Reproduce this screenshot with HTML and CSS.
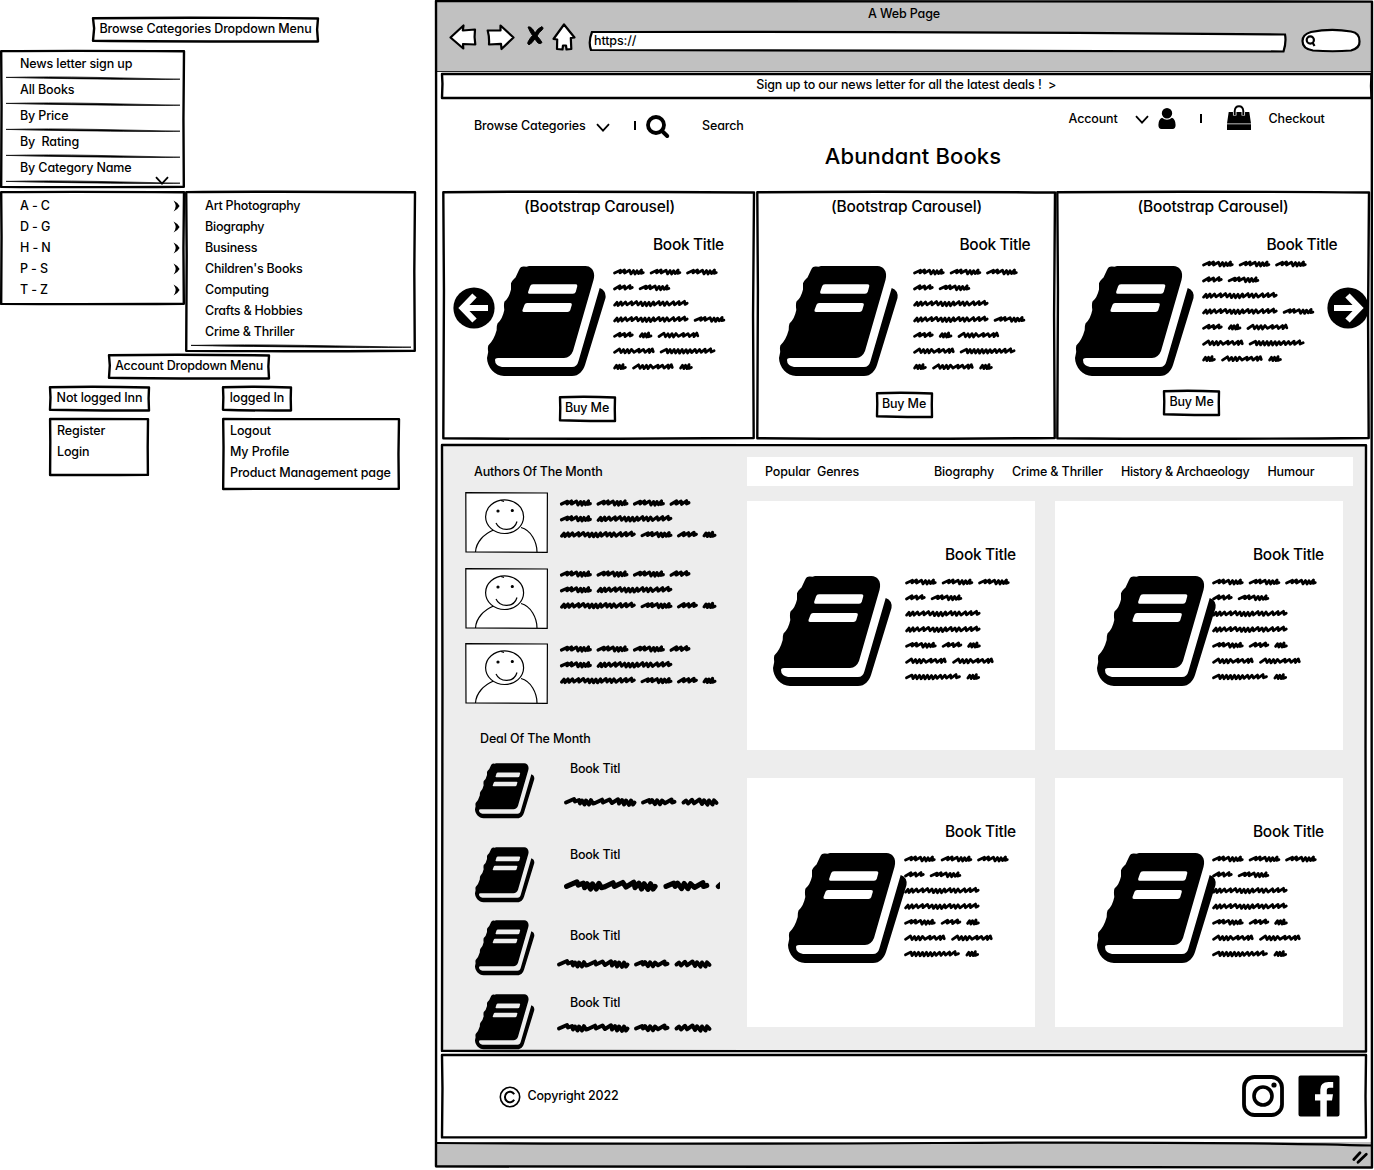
FILE: index.html
```
<!DOCTYPE html>
<html lang="en">
<head>
<meta charset="utf-8">
<title>Abundant Books wireframe</title>
<link rel="stylesheet" href="styles.css">
</head>
<body>
<svg class="defs" aria-hidden="true">
  <defs>
    <symbol id="frame-s" viewBox="0 0 100 100" preserveAspectRatio="none"><path vector-effect="non-scaling-stroke" d="M0 1Q45 -4 100 2L99.600 50 100 102Q40 103 0 99L.5 45Z"/></symbol>
    <symbol id="frame-m" viewBox="0 0 100 100" preserveAspectRatio="none"><path vector-effect="non-scaling-stroke" d="M.1 .1Q40 -.4 100 .2L99.700 50 99.900 99.800Q45 100.400 .1 99.900L.3 40Z"/></symbol>
    <symbol id="frame-l" viewBox="0 0 100 100" preserveAspectRatio="none"><path vector-effect="non-scaling-stroke" d="M0 0Q40 -.05 100 .05L99.950 50 100 100Q45 100.100 0 99.900L.05 40Z"/></symbol>
    <symbol id="rule" viewBox="0 0 174 5"><path d="M0 2.400Q40 1.400 90 2.400T174 4.200Q150 4.800 90 4T0 2.400Z" stroke="#000" stroke-width=".7"/></symbol>
    <symbol id="chevron" viewBox="0 0 14 9"><path d="M1 1.200 7 7.600 13 1.200" fill="none" stroke="#000" stroke-width="1.800"/></symbol>
    <symbol id="dart" viewBox="0 0 7 12"><path d="M.6.4Q4.400 2.200 6.600 6 4.400 9.800.6 11.600 2.600 8.400 2.700 6 2.600 3.600.6.4Z"/></symbol>
    <symbol id="book" viewBox="0 0 119 110"><path fill-rule="evenodd" d="M37 .6Q33.500.3 32 4L28.500 11.500Q24.500 15 24 17.500L24 23.500Q22 32 17.500 35.500 16.500 38 17.300 44 15.500 53 10.500 57.500 9.500 60 9.700 64 7 74 1.300 79.500.5 82 1.200 86L0 92C0 101 8 110 17 110H85C92 110 96 105 98 99L118.500 32Q119.500 24.500 112.700 22L91.500 95Q90 101 85 101H15Q8 99.500 8 94 8 92 11 92H77Q83.500 91.500 86 85L106.500 14C109 5 104 0 98.500 0H42L39.500.8ZM46 18.300H88.500Q90.700 18.300 90.200 20.500L88.800 25.800Q88.200 27.800 86 27.800H42.500Q40.600 27.800 41.200 25.800L43 20.500Q43.600 18.300 46 18.300ZM40 37H83Q85.300 37 84.700 39.200L83.200 44.200Q82.500 46 80.500 46H37Q35 46 35.500 44L37.500 38.800Q38.200 37 40 37Z"/></symbol>

    <!-- scribbled words, named by their length -->
    <g id="w2"><path d="M1.600 6.200 3.500 3.500 4.800 6.800 6.500 3.500 8 6.800 10 2.800 10 6.600 12.400 5.700"/></g>
    <g id="w3"><path d="M1.500 6.200 7 3 6.500 6 11.500 3.200 12 6.300 17 2.800 17 5.800 19.300 4.700"/></g>
    <g id="w4"><path d="M1.500 6 7.500 3.300 7 5.900 11.500 3 11.500 6 16.500 3.200 18 6.900 20.500 3.600 22 7 24 3.700 25.500 6.500 28.500 3 28 6.300 30.300 5.700"/></g>
    <g id="w6"><path d="M1.500 6.300 6.500 3 8 6.500 10.500 3.600 12 6.800 14.500 3.500 16 6.800 18.500 3.400 21 6.200 26 3.300 26 6.200 30.500 3.400 32 6.300 36 3.300 36.500 6.500 39.300 2.900 40.300 5.700"/></g>
    <g id="w8"><path d="M1.500 6 7 3.300 8 6.800 10.500 3.500 12 6.900 14.500 3.500 16 7 18.500 3.600 20 7.100 22.500 3.500 24 7 26.500 3.700 28 7 30.500 3.700 32 6.600 35.500 3.400 37 6.600 40 3.400 41.500 6.300 45.500 3.200 46 6.300 51 2.800 51.500 6 54.500 4.800"/></g>
    <g id="w10"><path d="M1.600 6.500 4 3.700 5 6.900 8 3.400 9 6.600 12.500 3.400 14 6.300 18.500 3.200 19 6.300 23.500 3 25 6.300 28 3.500 29.500 7 32 3.700 33.500 7.100 36 3.700 37.500 7.100 40.500 3.400 41.500 6.400 46 3 47 6.300 50 3.500 51.500 6.800 54 3.400 56 6.500 60.500 3.200 61.500 6.300 66 3 66.500 6.100 71.500 2.700 72 5.800 74.200 4.600"/></g>

    <symbol id="para-a" viewBox="0 0 113 105">
      <use href="#w4"/><use href="#w4" x="36.600"/><use href="#w4" x="73"/>
      <use href="#w3" y="15.800"/><use href="#w4" x="25.600" y="15.800"/>
      <use href="#w10" y="31.600"/>
      <use href="#w10" y="47.400"/><use href="#w4" x="80.600" y="47.400"/>
      <use href="#w3" y="63.200"/><use href="#w2" x="25.600" y="63.200"/><use href="#w6" x="44.500" y="63.200"/>
      <use href="#w6" y="79"/><use href="#w8" x="46.600" y="79"/>
      <use href="#w2" y="94.800"/><use href="#w6" x="19" y="94.800"/><use href="#w2" x="66" y="94.800"/>
    </symbol>
    <symbol id="para-b" viewBox="0 0 113 105">
      <use href="#w4"/><use href="#w4" x="36.600"/><use href="#w4" x="73"/>
      <use href="#w3" y="15.800"/><use href="#w4" x="25.600" y="15.800"/>
      <use href="#w10" y="31.600"/>
      <use href="#w10" y="47.400"/>
      <use href="#w4" y="63.200"/><use href="#w3" x="36.600" y="63.200"/><use href="#w2" x="62" y="63.200"/>
      <use href="#w6" y="79"/><use href="#w6" x="47" y="79"/>
      <use href="#w8" y="94.800"/><use href="#w2" x="61.300" y="94.800"/>
    </symbol>
    <symbol id="para-c" viewBox="0 0 158 42">
      <use href="#w4"/><use href="#w4" x="36.600"/><use href="#w4" x="73"/><use href="#w3" x="109.600"/>
      <use href="#w4" y="15.800"/><use href="#w10" x="36.600" y="15.800"/>
      <use href="#w10" y="31.600"/><use href="#w4" x="80.600" y="31.600"/><use href="#w3" x="117" y="31.600"/><use href="#w2" x="142.500" y="31.600"/>
    </symbol>
    <symbol id="line" viewBox="0 0 155 12">
      <path d="M2 6.500 10 3 11 5.500 15 4 16 7.500 18 4.500 20.500 8.500 22 4.500 25 8.500 27 4.200 29 7.500 31 7 38 3.700 39 6.500 45.500 3.500 48 7 54 3.300 55 7.500 58 4 60 8.500 62 4.500 65 8.800 67 4.500 69 8.500 70.500 6.500"/>
      <path d="M79 6.500 85 4 86 6.500 88 4 91 8.200 93 4.300 96 8.200 98 4.500 101 7.300 107.500 3.600 108 6.500 110.500 5.800"/>
      <path d="M119.500 6.500 122 4.500 124 7.500 128 3.800 130 7.300 135.500 3.500 138 8 140 4.300 143.500 8.600 145 4.500 148.500 8.500 150 4.300 152.500 6.800"/>
    </symbol>
    <symbol id="portrait" viewBox="0 0 83 61">
      <path d="M.8.7 82.400 1 82.200 60.300 1 60Z" fill="#fff"/>
      <path d="M10.500 60C11 50 19 42 28.500 38M56 35.500C66 38 72 50 72 60" fill="none"/>
      <ellipse cx="39.600" cy="24.700" rx="19" ry="16.800" fill="#fff"/>
      <path d="M31 31C35 39.500 49 40 52 29.500" fill="none"/>
      <circle cx="33" cy="19" r="1" fill="#000"/><circle cx="47.300" cy="18.500" r="1" fill="#000"/>
      <path d="M36 8.500 39 9.500" fill="none"/>
    </symbol>
  </defs>
</svg>

<aside class="notes">
  <h2 class="tag tag-browse"><svg class="frame"><use href="#frame-s"/></svg>Browse Categories Dropdown Menu</h2>

  <ul class="menu menu-main">
    <svg class="frame"><use href="#frame-m"/></svg>
    <li><span>News letter sign up</span><svg class="rule"><use href="#rule"/></svg></li>
    <li><span>All Books</span><svg class="rule"><use href="#rule"/></svg></li>
    <li><span>By Price</span><svg class="rule"><use href="#rule"/></svg></li>
    <li><span>By&nbsp; Rating</span><svg class="rule"><use href="#rule"/></svg></li>
    <li><span>By Category Name</span><svg class="rule"><use href="#rule"/></svg></li>
    <svg class="chevron menu-chevron"><use href="#chevron"/></svg>
  </ul>

  <div class="submenus">
    <ul class="menu menu-letters">
      <svg class="frame"><use href="#frame-m"/></svg>
      <li><span>A - C</span><svg class="dart"><use href="#dart"/></svg></li>
      <li><span>D - G</span><svg class="dart"><use href="#dart"/></svg></li>
      <li><span>H - N</span><svg class="dart"><use href="#dart"/></svg></li>
      <li><span>P - S</span><svg class="dart"><use href="#dart"/></svg></li>
      <li><span>T - Z</span><svg class="dart"><use href="#dart"/></svg></li>
    </ul>
    <ul class="menu menu-genres">
      <svg class="frame"><use href="#frame-m"/></svg>
      <li><span>Art Photography</span></li>
      <li><span>Biography</span></li>
      <li><span>Business</span></li>
      <li><span>Children's Books</span></li>
      <li><span>Computing</span></li>
      <li><span>Crafts &amp; Hobbies</span></li>
      <li><span>Crime &amp; Thriller</span></li>
      <svg class="rule rule-wide" viewBox="0 0 174 5" preserveAspectRatio="none"><use href="#rule" width="174" height="5"/></svg>
    </ul>
  </div>

  <h2 class="tag tag-account"><svg class="frame"><use href="#frame-s"/></svg>Account Dropdown Menu</h2>

  <div class="accounts">
    <section class="account-out">
      <h3 class="tag"><svg class="frame"><use href="#frame-s"/></svg>Not logged Inn</h3>
      <ul class="menu"><svg class="frame"><use href="#frame-m"/></svg><li><span>Register</span></li><li><span>Login</span></li></ul>
    </section>
    <section class="account-in">
      <h3 class="tag"><svg class="frame"><use href="#frame-s"/></svg>logged In</h3>
      <ul class="menu"><svg class="frame"><use href="#frame-m"/></svg><li><span>Logout</span></li><li><span>My Profile</span></li><li><span>Product Management page</span></li></ul>
    </section>
  </div>
</aside>

<div class="browser">
  <svg class="frame browser-frame"><use href="#frame-l"/></svg>
  <header class="chrome">
    <p class="chrome-title"><span>A Web Page</span></p>
    <div class="toolbar">
      <svg class="tool back" viewBox="0 0 28 26"><path d="M1.500 13.500 14.500 1.500 13.800 6.500 26 5.500Q25 13 26.300 20.500L14 20 14.300 24.500Z"/></svg>
      <svg class="tool forward" viewBox="0 0 29 26"><path d="M1.700 6.500 14.500 6.500 14.500 1.500 27.500 13.500 15.500 25 15 19.800 3 20.500Q3.500 13 1.700 6.500Z"/></svg>
      <svg class="tool stop" viewBox="0 0 18 20"><path d="M2 1Q4 0 6.500 3L9 7Q12 2 16 .6 18 2 16.500 3.500 13 6 11 10 14 13 16 16.500 14.500 18.500 12 17L8.800 13Q6 17.500 3 18.800 1 18 2 16 4 12 6.500 9.500 3.500 5 2 1Z"/></svg>
      <svg class="tool home" viewBox="0 0 24 28"><path d="M12 1.500 22.500 14.500 18.800 15 19.300 26 14.500 26.500 14 22.500 11 22.500 10.500 26.500 5 26 5.200 16.500 1.500 16Z"/></svg>
      <div class="url"><svg viewBox="0 0 699 24" class="outline"><path d="M4 2Q300 1 697 4.500 698.500 12 695.500 21.500 350 21.500 3 20 0 12 4 2Z"/></svg><span>https://</span></div>
      <svg class="find outline" viewBox="0 0 60 25"><path d="M10 4Q30 0 50 3.500 59 5 58.500 13.500 59 20 50 22.500 32 24 12 22.500 1.500 21 1.500 13 1.500 6.500 10 4Z"/><circle cx="9.300" cy="12" r="3.600"/><path d="M11.500 14.500 13.500 18"/></svg>
    </div>
  </header>

  <p class="newsletter"><svg class="frame"><use href="#frame-l"/></svg><span>Sign up to our news letter for all the latest deals !&nbsp; &gt;</span></p>

  <div class="masthead">
    <nav class="nav-left">
      <span>Browse Categories</span>
      <svg class="chevron"><use href="#chevron"/></svg>
      <i class="bar"></i>
      <svg class="search-icon" viewBox="0 0 24 24"><circle cx="10" cy="10" r="8" fill="none" stroke="#000" stroke-width="3.800"/><path d="M15.800 15.800 21.200 21" stroke="#000" stroke-width="4" stroke-linecap="round"/></svg>
      <span>Search</span>
    </nav>
    <h1><span>Abundant Books</span></h1>
    <nav class="nav-right">
      <span>Account</span>
      <svg class="chevron"><use href="#chevron"/></svg>
      <svg class="person" viewBox="0 0 18 21"><path d="M9 0A5.200 5.300 0 1 1 9 10.600 5.200 5.300 0 1 1 9 0ZM4 9.800Q9 13.500 14 9.800 17.600 11.500 17.600 17 17.500 21 14.500 21H3.500Q.5 21 .4 17 .4 11.500 4 9.800Z"/></svg>
      <i class="bar"></i>
      <svg class="bag" viewBox="0 0 24 25"><path d="M1.700 7H22.300L24 18.500H0ZM0 19.300H24V25H0Z"/><path d="M7.700 10.500V6Q8 1 12 1 16 1 16.300 6V10.500" fill="none" stroke="#fff" stroke-width="3.500"/><path d="M7.700 10V6Q8 1.200 12 1.200 16 1.200 16.300 6V10" fill="none" stroke="#000" stroke-width="1.900"/></svg>
      <span>Checkout</span>
    </nav>
  </div>

  <section class="carousel">
    <article class="slide slide-1">
      <svg class="frame"><use href="#frame-m"/></svg>
      <h2>(Bootstrap Carousel)</h2><h3>Book Title</h3>
      <div class="volume"><svg class="book"><use href="#book"/></svg><svg class="para"><use href="#para-a"/></svg></div>
      <button><svg class="frame"><use href="#frame-s"/></svg>Buy Me</button>
      <svg class="arrow arrow-prev" viewBox="0 0 42 42"><circle cx="21" cy="21" r="20.600"/><path d="M21.500 8.500 9.500 21 21.500 33.500M10 21H35" fill="none" stroke="#fff" stroke-width="6"/></svg>
    </article>
    <article class="slide slide-2">
      <svg class="frame"><use href="#frame-m"/></svg>
      <h2>(Bootstrap Carousel)</h2><h3>Book Title</h3>
      <div class="volume"><svg class="book"><use href="#book"/></svg><svg class="para"><use href="#para-a"/></svg></div>
      <button><svg class="frame"><use href="#frame-s"/></svg>Buy Me</button>
    </article>
    <article class="slide slide-3">
      <svg class="frame"><use href="#frame-m"/></svg>
      <h2>(Bootstrap Carousel)</h2><h3>Book Title</h3>
      <div class="volume"><svg class="book"><use href="#book"/></svg><svg class="para"><use href="#para-a"/></svg></div>
      <button><svg class="frame"><use href="#frame-s"/></svg>Buy Me</button>
      <svg class="arrow arrow-next" viewBox="0 0 42 42"><circle cx="21" cy="21" r="20.600"/><path d="M20.500 8.500 32.500 21 20.500 33.500M32 21H7" fill="none" stroke="#fff" stroke-width="6"/></svg>
    </article>
  </section>

  <main class="shop">
    <svg class="frame"><use href="#frame-l"/></svg>
    <div class="side">
      <h2 class="authors-title"><span>Authors Of The Month</span></h2>
      <div class="author"><svg class="portrait"><use href="#portrait"/></svg><svg class="bio"><use href="#para-c"/></svg></div>
      <div class="author author-2"><svg class="portrait"><use href="#portrait"/></svg><svg class="bio"><use href="#para-c"/></svg></div>
      <div class="author author-3"><svg class="portrait"><use href="#portrait"/></svg><svg class="bio"><use href="#para-c"/></svg></div>
      <h2 class="deals-title"><span>Deal Of The Month</span></h2>
      <div class="deal deal-1"><svg class="mini-book"><use href="#book"/></svg><div><span>Book Titl</span><svg class="line"><use href="#line"/></svg></div></div>
      <div class="deal deal-2"><svg class="mini-book"><use href="#book"/></svg><div><span>Book Titl</span><svg class="line" viewBox="0 0 121 12" preserveAspectRatio="xMinYMin slice"><use href="#line" width="155" height="12"/></svg></div></div>
      <div class="deal deal-3"><svg class="mini-book"><use href="#book"/></svg><div><span>Book Titl</span><svg class="line"><use href="#line"/></svg></div></div>
      <div class="deal deal-4"><svg class="mini-book"><use href="#book"/></svg><div><span>Book Titl</span><svg class="line"><use href="#line"/></svg></div></div>
    </div>
    <div class="catalogue">
      <nav class="genres"><b>Popular&nbsp; Genres</b><span>Biography</span><span>Crime &amp; Thriller</span><span class="genre-long">History &amp; Archaeology</span><span>Humour</span></nav>
      <div class="cards">
        <article class="card card-1"><h3>Book Title</h3><div class="volume"><svg class="book"><use href="#book"/></svg><svg class="para"><use href="#para-b"/></svg></div></article>
        <article class="card card-2"><h3>Book Title</h3><div class="volume"><svg class="book"><use href="#book"/></svg><svg class="para"><use href="#para-b"/></svg></div></article>
        <article class="card card-3"><h3>Book Title</h3><div class="volume"><svg class="book"><use href="#book"/></svg><svg class="para"><use href="#para-b"/></svg></div></article>
        <article class="card card-4"><h3>Book Title</h3><div class="volume"><svg class="book"><use href="#book"/></svg><svg class="para"><use href="#para-b"/></svg></div></article>
      </div>
    </div>
  </main>

  <footer class="footer">
    <svg class="frame"><use href="#frame-l"/></svg>
    <svg class="copy" viewBox="0 0 22 22"><circle cx="11" cy="11" r="9.700" fill="none" stroke="#000" stroke-width="1.600"/><path d="M15.200 8.200A5 5.300 0 1 0 15.200 13.800" fill="none" stroke="#000" stroke-width="2"/></svg>
    <span>Copyright 2022</span>
    <svg class="instagram" viewBox="0 0 42 42"><rect x="2" y="2" width="38" height="38" rx="10.500" fill="none" stroke="#000" stroke-width="3.800"/><circle cx="21" cy="21" r="9" fill="none" stroke="#000" stroke-width="3.600"/><circle cx="32" cy="10" r="2.600"/></svg>
    <svg class="facebook" viewBox="0 0 42 42"><path fill-rule="evenodd" d="M2.500.5H39.500Q41.500.5 41.500 2.500V39.500Q41.500 41.500 39.500 41.500H28.800V25.600H34L35 19.200H28.800V15.500Q28.800 12.800 31.500 12.800H35.200V7H30.500Q22.300 7 22.300 14.500V19.200H17V25.600H22.300V41.500H2.500Q.5 41.500.5 39.500V2.500Q.5.5 2.500.5Z"/></svg>
  </footer>
  <div class="status"><svg viewBox="0 0 936 27" preserveAspectRatio="none" class="status-line"><path d="M0 1Q200 2.500 500 1T936 3.500"/></svg><svg class="grip" viewBox="0 0 16 13"><path d="M1.800 8.500 8 1.800M6 11.300 14.300 3.300"/></svg></div>
</div>
</body>
</html>
```
FILE: styles.css
```
* { box-sizing: border-box; margin: 0; padding: 0; }
body {
  display: flex;
  width: 1374px;
  height: 1170px;
  overflow: hidden;
  background: #fff;
  color: #000;
  font: 500 12.5px/21px Inter, "Open Sans", sans-serif;
  font-feature-settings: "cv11";
  letter-spacing: -0.13px;
  white-space: nowrap;
}
h1, h2, h3, button { font: inherit; letter-spacing: inherit; font-feature-settings: inherit; }
ul { list-style: none; }
svg { display: block; flex: none; overflow: visible; }
symbol { overflow: visible; }
.defs { position: absolute; width: 0; height: 0; }

/* hand-drawn outline laid over its box */
.frame {
  position: absolute;
  inset: 0;
  width: 100%;
  height: 100%;
  fill: none;
  stroke: #000;
  stroke-width: 2.4;
  stroke-linejoin: round;
  pointer-events: none;
}

.tag, .menu, .browser, .newsletter, .slide, .slide button, .shop, .footer { position: relative; }
.chevron { width: 14px; height: 9px; }

/* left column */
.notes { width: 436px; flex: none; padding-top: 18px; }
.tag { height: 23px; line-height: 22px; text-align: center; }
.tag-browse { width: 225px; margin-left: 93px; }
.menu { padding-top: 3px; }
.menu-main { width: 183px; height: 136px; margin: 10px 0 0 1px; padding-top: 2px; }
.menu-main li { height: 26px; padding-left: 19px; }
.menu-main span { display: block; }
.rule { width: 174px; height: 5px; margin-left: -14px; }
.menu-main .rule { margin-top: 1px; }
.menu-chevron { position: absolute; left: 154px; top: 125px; }
.submenus { display: flex; gap: 2px; margin: 5px 0 0 1px; align-items: flex-start; }
.menu-letters { width: 183px; height: 112px; }
.menu-letters li { display: flex; justify-content: space-between; align-items: center; padding: 0 4px 0 19px; }
.dart { width: 7px; height: 12px; margin-top: 1px; }
.menu-genres { width: 229px; height: 159px; }
.menu-genres li { padding-left: 19px; letter-spacing: -0.22px; }
.rule-wide { width: 220px; margin: 1px 0 0 5px; }
.tag-account { width: 160px; margin: 4px 0 0 109px; letter-spacing: -0.2px; }
.accounts { display: flex; margin: 9px 0 0 50px; gap: 74px; }
.accounts .menu { margin-top: 9px; padding: 1px 0 0 7px; }
.account-out { width: 99px; }
.account-out .menu { width: 98px; height: 56px; }
.account-in .tag { width: 68px; }
.account-in .menu { width: 176px; height: 70px; }

/* browser window */
.browser { width: 936px; height: 1166.5px; margin-top: 1px; flex: none; }
.browser-frame { z-index: 1; }
.chrome { height: 71px; background: #c1c1c1; border-bottom: 1px solid #222; }
.chrome-title { padding-top: 3px; text-align: center; line-height: 20px; }
.toolbar { display: flex; align-items: flex-start; padding-left: 13px; }
.tool { fill: #fff; stroke: #000; stroke-width: 2.2; stroke-linejoin: round; }
.back { width: 28px; height: 26px; }
.forward { width: 29px; height: 26px; margin-left: 9px; }
.stop { width: 18px; height: 20px; margin: 2px 0 0 11px; fill: #000; stroke: #000; stroke-width: 1; }
.home { width: 24px; height: 28px; margin-left: 8px; margin-top: -1px; }
.url { position: relative; width: 699px; height: 24px; margin: 6px 0 0 12px; padding-left: 6px; }
.outline { fill: #fff; stroke: #000; stroke-width: 2.2; }
.url svg { position: absolute; inset: 0; width: 699px; height: 24px; }
.url span { position: relative; }
.find { width: 60px; height: 25px; margin: 4px 0 0 14px; }

.newsletter { height: 24px; margin: 1.5px 1px 0 5.5px; text-align: center; line-height: 22px; }
.masthead { display: grid; grid-template-columns: 350px 254px 332px; height: 94.5px; }
.masthead nav { display: flex; align-items: center; height: 30px; }
.nav-left { padding-left: 38px; margin-top: 12.5px; }
.nav-left span:first-child { width: 122px; }
.bar { width: 1.5px; height: 9px; background: #000; }
.nav-left .chevron { margin-top: 4px; }
.nav-left .bar { margin-left: 24px; }
.search-icon { width: 24px; height: 24px; margin: 3px 32px 0 10.5px; }
h1 { margin-top: 46px; font-size: 22px; line-height: 24px; text-align: center; letter-spacing: 0.14px; }
.nav-right { margin-top: 5.5px; padding-left: 28.500px; }
.nav-right span:first-child { width: 66.500px; }
.nav-right .chevron { margin-top: 3px; }
.person { width: 18px; height: 21px; margin: 1px 24px 0 9px; }
.bag { width: 24px; height: 25px; margin: -2px 18px 0 25px; }

.carousel { display: flex; height: 246.500px; margin-left: 7px; }
.slide { padding-top: 5px; }
.slide-1 { width: 311px; }
.slide-2 { width: 298px; margin: 0 2px 0 3px; }
.slide-3 { width: 312px; }
.slide h2, .slide h3, .card h3 { font-size: 15.500px; line-height: 20px; letter-spacing: -0.2px; }
.slide h3, .card h3 { letter-spacing: -0.330px; }
.slide h3 { margin-top: 17.500px; }
.slide-1 h2 { padding-left: 81px; }
.slide-1 h3 { padding-left: 210px; }
.slide-2 h2 { padding-left: 74px; }
.slide-2 h3 { padding-left: 202.500px; }
.slide-3 h2 { padding-left: 80.500px; }
.slide-3 h3 { padding-left: 209.500px; }
.volume { display: flex; height: 110px; }
.slide .volume { margin-top: 11.500px; }
.book { width: 119px; height: 110px; }
.para { width: 113px; height: 105px; }
.para, .bio, .line { fill: none; stroke: #000; stroke-width: 2.800; stroke-linecap: round; stroke-linejoin: round; }
.slide-1 .book { margin-left: 43.700px; }
.slide-1 .para { margin: 1px 0 0 7px; }
.slide-2 .book { margin-left: 21.800px; }
.slide-2 .para { margin: 1px 0 0 15.700px; }
.slide-3 .book { margin-left: 17.700px; }
.slide-3 .para { margin: -7px 0 0 8.300px; }
button { display: block; width: 55px; height: 23.500px; line-height: 22px; border: 0; background: none; color: inherit; }
.slide-1 button { margin: 20.500px 0 0 116.500px; }
.slide-2 button { margin: 16.500px 0 0 119.500px; }
.slide-3 button { margin: 14.500px 0 0 107px; }
.arrow { position: absolute; top: 95px; width: 42px; height: 42px; }
.arrow-prev { left: 9.500px; }
.arrow-next { right: .5px; }

.shop { display: flex; width: 924px; height: 606.500px; margin: 6.500px 0 0 6px; background: #ededed; }
.side { width: 305px; padding-top: 16px; flex: none; }
.authors-title { padding-left: 32px; letter-spacing: -0.22px; }
.author { display: flex; margin: 10px 0 0 23px; height: 61px; gap: 11.500px; }
.author-2 { margin-top: 15px; }
.author-3 { margin-top: 14px; }
.portrait { width: 83px; height: 61px; stroke: #000; stroke-width: 1.200; }
.bio { width: 158px; height: 42px; margin-top: 6px; stroke-width: 3.200; }
.author-2 .bio { margin-top: 1px; }
.author-3 .bio { margin-top: 1px; }
.deals-title { margin-top: 24px; padding-left: 38px; }
.deal { display: flex; height: 55.500px; margin-left: 33px; }
.deal div { display: flex; flex-direction: column; }
.mini-book { width: 59.500px; height: 55.500px; }
.deal span { margin-left: 35.500px; height: 21px; letter-spacing: -0.250px; }
.line { width: 155px; height: 12px; stroke-width: 4; }
.deal-1 { margin-top: 13.500px; }
.deal-1 span { margin-top: -5px; }
.deal-1 .line { margin: 17.500px 0 0 29.500px; }
.deal-2 { margin-top: 28.500px; }
.deal-2 span { margin-top: -3px; }
.deal-2 .line { width: 156px; height: 15.500px; margin: 13.500px 0 0 29.500px; overflow: hidden; }
.deal-3 { margin-top: 18px; }
.deal-3 span { margin-top: 5px; }
.deal-3 .line, .deal-4 .line { margin: 12px 0 0 22px; }
.deal-4 { margin-top: 18.500px; }
.deal-4 span { margin-top: -2px; }
.deal-4 .line { margin-top: 9px; }

.catalogue { padding-top: 12px; }
.genres { display: flex; width: 606px; height: 29px; padding-left: 18px; line-height: 29px; background: #fff; }
.genres b { width: 169px; font-weight: inherit; }
.genres span + span { margin-left: 18px; }
.genres .genre-long { letter-spacing: -0.280px; }
.cards { display: grid; grid-template-columns: 288px 288px; gap: 28px 20px; margin-top: 15px; }
.card { height: 249px; padding-top: 43.500px; background: #fff; }
.card h3 { padding-left: 198px; }
.card .volume { margin-top: 11.500px; }
.card-1 .book { margin-left: 25.500px; }
.card-1 .para { margin: 1px 0 0 13.200px; }
.card-2 .book, .card-4 .book { margin-left: 42px; }
.card-2 .para, .card-4 .para { margin: 1px 0 0 -4px; }
.card-3 .book { margin-left: 40.500px; }
.card-3 .para { margin: 1px 0 0 -3px; }

.footer { display: flex; align-items: center; width: 924px; height: 82.500px; margin: 3.500px 0 0 6px; }
.copy { width: 22px; height: 22px; margin: 2px 8px 0 56.500px; }
.footer span { margin-left: -1px; margin-top: -1px; letter-spacing: -0.180px; }
.instagram { width: 42px; height: 42px; margin-left: auto; }
.facebook { width: 42px; height: 42px; margin: 0 26px 0 14px; }
.status { position: relative; height: 26px; margin-top: 4px; background: #c1c1c1; }
.status-line { width: 936px; height: 27px; fill: none; stroke: #000; stroke-width: 2.200; }
.grip { position: absolute; right: 4px; top: 9px; width: 16px; height: 13px; stroke: #000; stroke-width: 2.800; stroke-linecap: round; }
```
